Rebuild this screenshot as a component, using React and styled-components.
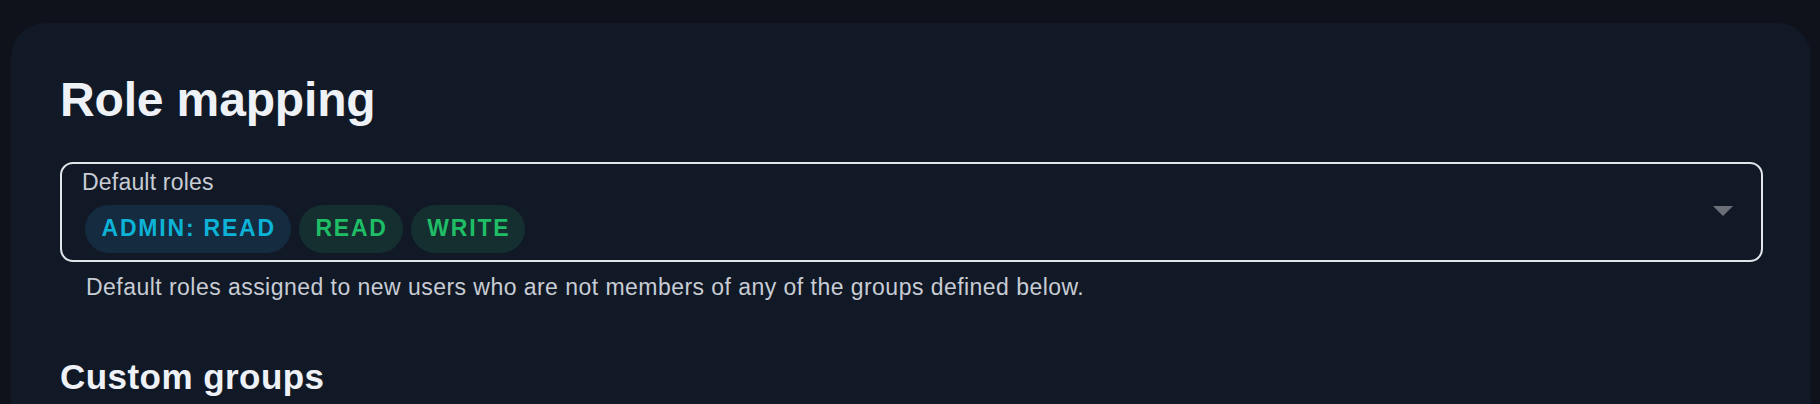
import React from "react";
import styled, { createGlobalStyle } from "styled-components";

const Global = createGlobalStyle`
  html, body {
    margin: 0;
    padding: 0;
    background: #0f121a;
    overflow: hidden;
    font-family: "Liberation Sans", Arial, sans-serif;
  }
`;

const Page = styled.div`
  padding: 23px 9px 0 11px;
  background: #0f121a;
  min-height: 404px;
  box-sizing: border-box;
`;

const Card = styled.section`
  background: #111927;
  border-radius: 34px;
  padding: 48px 48px 80px 49px;
  min-height: 520px;
  box-sizing: border-box;
`;

const Title = styled.h1`
  margin: 0 0 33px;
  font-size: 48px;
  line-height: 1.2;
  font-weight: 700;
  letter-spacing: -0.15px;
  color: #eef2f7;
`;

const SubTitle = styled.h2`
  margin: 55px 0 0;
  font-size: 35px;
  line-height: 1.2;
  font-weight: 700;
  letter-spacing: 0.45px;
  color: #eef2f7;
`;

const Field = styled.div`
  display: flex;
  align-items: center;
  border: 2px solid #e2e5ea;
  border-radius: 13px;
  padding: 5px 28px 7px 20px;
`;

const FieldBody = styled.div`
  flex: 1;
  display: flex;
  flex-direction: column;
`;

const Label = styled.label`
  font-size: 23px;
  line-height: 1.2;
  letter-spacing: 0.2px;
  color: #c8ccd4;
  margin-bottom: 8.5px;
`;

const ChipRow = styled.div`
  display: flex;
  gap: 8px;
  padding-left: 3px;
`;

const Chip = styled.span`
  display: inline-flex;
  align-items: center;
  height: 48px;
  padding: 0 15px 0 16.5px;
  border-radius: 24px;
  font-size: 23px;
  font-weight: 700;
  letter-spacing: 1.8px;
  background: ${(p) => (p.$tone === "cyan" ? "#152b40" : "#152e2f")};
  color: ${(p) => (p.$tone === "cyan" ? "#0cb3d6" : "#1fbd66")};
`;

const Arrow = styled.svg`
  width: 20px;
  height: 10px;
  flex: none;
  display: block;
`;

const Helper = styled.p`
  margin: 12px 0 0 26px;
  font-size: 23px;
  line-height: 1.2;
  letter-spacing: 0.46px;
  color: #c8ccd4;
`;

export default function App() {
  return (
    <>
      <Global />
      <Page>
        <Card>
          <Title>Role mapping</Title>
          <Field>
            <FieldBody>
              <Label>Default roles</Label>
              <ChipRow>
                <Chip $tone="cyan">ADMIN: READ</Chip>
                <Chip $tone="green">READ</Chip>
                <Chip $tone="green">WRITE</Chip>
              </ChipRow>
            </FieldBody>
            <Arrow viewBox="0 0 20 10" aria-hidden="true">
              <path d="M0 0 L20 0 L10 10 Z" fill="#6b6f78" />
            </Arrow>
          </Field>
          <Helper>
            Default roles assigned to new users who are not members of any of the groups defined below.
          </Helper>
          <SubTitle>Custom groups</SubTitle>
        </Card>
      </Page>
    </>
  );
}
